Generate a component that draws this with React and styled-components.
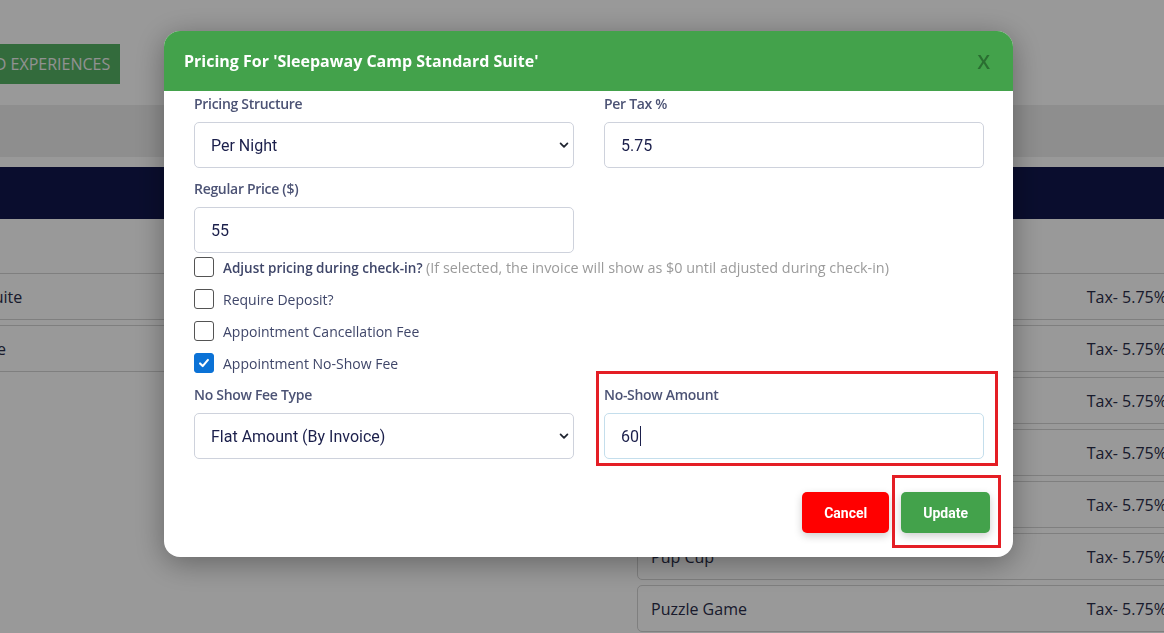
import styled, { createGlobalStyle } from "styled-components";

const GlobalStyle = createGlobalStyle`
  html, body {
    margin: 0;
    padding: 0;
    background: #fff;
    overflow: hidden;
    font-family: "Open Sans", "Noto Sans", sans-serif;
  }
  * { box-sizing: border-box; }
`;

const leftItems = ["Sleepaway Camp Standard Suite", "Sleepaway Camp Deluxe Suite"];
const rightItems = ["Bandana", "Bow Tie", "Chew Toy", "Dog Bed", "Leash", "Pup Cup", "Puzzle Game"];

export default function App() {
  return (
    <>
      <GlobalStyle />
      <Page>
        <TopBar>
          <AddButton>Add Experiences</AddButton>
        </TopBar>
        <TabBand />
        <TableHead />
        <ListGrid>
          <Column>
            {leftItems.map((name) => (
              <Card key={name}>
                <CardName>{name}</CardName>
              </Card>
            ))}
          </Column>
          <Column>
            {rightItems.map((name) => (
              <Card key={name}>
                <CardName>{name}</CardName>
                <CardTax>Tax- 5.75%</CardTax>
              </Card>
            ))}
          </Column>
        </ListGrid>
      </Page>

      <Overlay />

      <Modal>
        <ModalHeader>
          <ModalTitle>Pricing For 'Sleepaway Camp Standard Suite'</ModalTitle>
          <CloseX>X</CloseX>
        </ModalHeader>
        <ModalBody>
          <FieldRow>
            <Field>
              <Label>Pricing Structure</Label>
              <SelectBox>
                <span>Per Night</span>
                <Chevron />
              </SelectBox>
            </Field>
            <Field>
              <Label>Per Tax %</Label>
              <InputBox>5.75</InputBox>
            </Field>
          </FieldRow>
          <FieldRow $top={11}>
            <Field>
              <Label>Regular Price ($)</Label>
              <InputBox>55</InputBox>
            </Field>
            <Field />
          </FieldRow>

          <CheckList>
            <CheckRow>
              <Box />
              <CheckText $strong>
                Adjust pricing during check-in? <Hint>(If selected, the invoice will show as $0 until adjusted during check-in)</Hint>
              </CheckText>
            </CheckRow>
            <CheckRow>
              <Box />
              <CheckText>Require Deposit?</CheckText>
            </CheckRow>
            <CheckRow>
              <Box />
              <CheckText>Appointment Cancellation Fee</CheckText>
            </CheckRow>
            <CheckRow>
              <Box $checked>
                <svg width="14" height="14" viewBox="0 0 16 16">
                  <path d="M3.5 8.5l3 3 6-7" fill="none" stroke="#fff" strokeWidth="2.4" strokeLinecap="round" strokeLinejoin="round" />
                </svg>
              </Box>
              <CheckText>Appointment No-Show Fee</CheckText>
            </CheckRow>
          </CheckList>

          <FieldRow $top={8}>
            <Field>
              <Label>No Show Fee Type</Label>
              <SelectBox>
                <span>Flat Amount (By Invoice)</span>
                <Chevron />
              </SelectBox>
            </Field>
            <Field>
              <Highlight $t={14} $r={14} $b={7} $l={8} />
              <Label>No-Show Amount</Label>
              <InputBox $focus>
                60<Caret />
              </InputBox>
            </Field>
          </FieldRow>
        </ModalBody>
        <ModalFooter>
          <ActionButton $bg="#ff0000">Cancel</ActionButton>
          <ButtonWrap>
            <Highlight $t={17} $r={11} $b={15} $l={9} />
            <ActionButton $bg="#43a24b">Update</ActionButton>
          </ButtonWrap>
        </ModalFooter>
      </Modal>
    </>
  );
}

function Chevron() {
  return (
    <svg width="10" height="10" viewBox="0 0 16 16">
      <path d="M2.5 5.5L8 11l5.5-5.5" fill="none" stroke="#1f2430" strokeWidth="2.8" strokeLinecap="round" strokeLinejoin="round" />
    </svg>
  );
}

const Page = styled.div`
  width: 1164px;
  height: 633px;
  background: #fff;
`;

const TopBar = styled.div`
  height: 105px;
  padding-top: 44px;
`;

const AddButton = styled.div`
  display: inline-flex;
  align-items: center;
  height: 40px;
  margin-left: -37px;
  padding: 0 10px;
  background: #55b365;
  color: #f2f2f2;
  font-size: 16px;
  text-transform: uppercase;
`;

const TabBand = styled.div`
  height: 52px;
  background: #ededed;
`;

const TableHead = styled.div`
  height: 52px;
  margin-top: 10px;
  background: #11174d;
`;

const ListGrid = styled.div`
  display: grid;
  grid-template-columns: 856px 549px;
  column-gap: 13px;
  margin-top: 54px;
  margin-left: -232px;
`;

const Column = styled.div`
  display: flex;
  flex-direction: column;
  gap: 5px;
`;

const Card = styled.div`
  height: 47px;
  display: flex;
  align-items: center;
  justify-content: space-between;
  padding: 0 13px;
  border: 1px solid #d4d4d4;
  border-radius: 5px;
  color: #2a2d4a;
  font-size: 16px;
`;

const CardName = styled.span``;

const CardTax = styled.span`
  margin-right: 5px;
`;

const Overlay = styled.div`
  position: fixed;
  inset: 0;
  background: rgba(0, 0, 0, 0.4);
`;

const Modal = styled.div`
  position: fixed;
  left: 164px;
  top: 31px;
  width: 849px;
  height: 526px;
  background: #fff;
  border-radius: 16px;
  box-shadow: 0 6px 30px rgba(0, 0, 0, 0.35);
  display: flex;
  flex-direction: column;
`;

const ModalHeader = styled.div`
  height: 60px;
  flex: none;
  display: flex;
  align-items: center;
  justify-content: space-between;
  padding: 0 23px 0 20px;
  background: #43a24b;
  border-radius: 16px 16px 0 0;
`;

const ModalTitle = styled.h2`
  margin: 0;
  color: #fff;
  font-size: 16px;
  font-weight: 700;
`;

const CloseX = styled.span`
  color: #2a6e31;
  font-size: 20px;
  font-weight: 600;
`;

const ModalBody = styled.div`
  padding: 3px 30px 0;
`;

const FieldRow = styled.div`
  display: grid;
  grid-template-columns: 380px 380px;
  column-gap: 30px;
  margin-top: ${(p) => p.$top || 0}px;
`;

const Field = styled.div`
  position: relative;
`;

const Label = styled.div`
  height: 20px;
  line-height: 20px;
  margin-bottom: 8px;
  color: #4c5375;
  font-size: 14px;
  font-weight: 600;
  letter-spacing: -0.3px;
`;

const InputBox = styled.div`
  height: 46px;
  display: flex;
  align-items: center;
  padding: 0 16px;
  border: 1px solid ${(p) => (p.$focus ? "#c4deec" : "#ced2dc")};
  border-radius: 5px;
  color: #1b1f4b;
  font-family: Roboto, "Liberation Sans", sans-serif;
  font-size: 16px;
`;

const SelectBox = styled(InputBox)`
  justify-content: space-between;
  padding-right: 4px;
`;

const Caret = styled.span`
  display: inline-block;
  width: 1px;
  height: 20px;
  margin-left: 1px;
  background: #1b1f4b;
`;

const CheckList = styled.div`
  display: flex;
  flex-direction: column;
  gap: 4px;
`;

const CheckRow = styled.label`
  height: 28px;
  display: flex;
  align-items: center;
  gap: 9px;
`;

const Box = styled.span`
  width: 20px;
  height: 20px;
  flex: none;
  display: flex;
  align-items: center;
  justify-content: center;
  border: 1px solid ${(p) => (p.$checked ? "#0b72d6" : "#545454")};
  border-radius: 3px;
  background: ${(p) => (p.$checked ? "#0b72d6" : "#fff")};
`;

const CheckText = styled.span`
  color: #3f4669;
  font-size: ${(p) => (p.$strong ? 13.5 : 14)}px;
  font-weight: ${(p) => (p.$strong ? 600 : 500)};
`;

const Hint = styled.span`
  color: #9b9b9b;
  font-size: 14.4px;
  font-weight: 400;
`;

const ModalFooter = styled.div`
  display: flex;
  justify-content: flex-end;
  gap: 12px;
  margin-top: 33px;
  padding-right: 23px;
`;

const ButtonWrap = styled.div`
  position: relative;
`;

const ActionButton = styled.button`
  height: 41px;
  padding: 0 22px;
  border: none;
  border-radius: 5px;
  background: ${(p) => p.$bg};
  color: #fff;
  font-family: Roboto, "Liberation Sans", sans-serif;
  font-size: 14px;
  font-weight: 700;
  box-shadow: 0 3px 8px rgba(0, 0, 0, 0.2);
`;

const Highlight = styled.div`
  position: absolute;
  top: -${(p) => p.$t}px;
  right: -${(p) => p.$r}px;
  bottom: -${(p) => p.$b}px;
  left: -${(p) => p.$l}px;
  border: 3px solid #e41e25;
  pointer-events: none;
`;
